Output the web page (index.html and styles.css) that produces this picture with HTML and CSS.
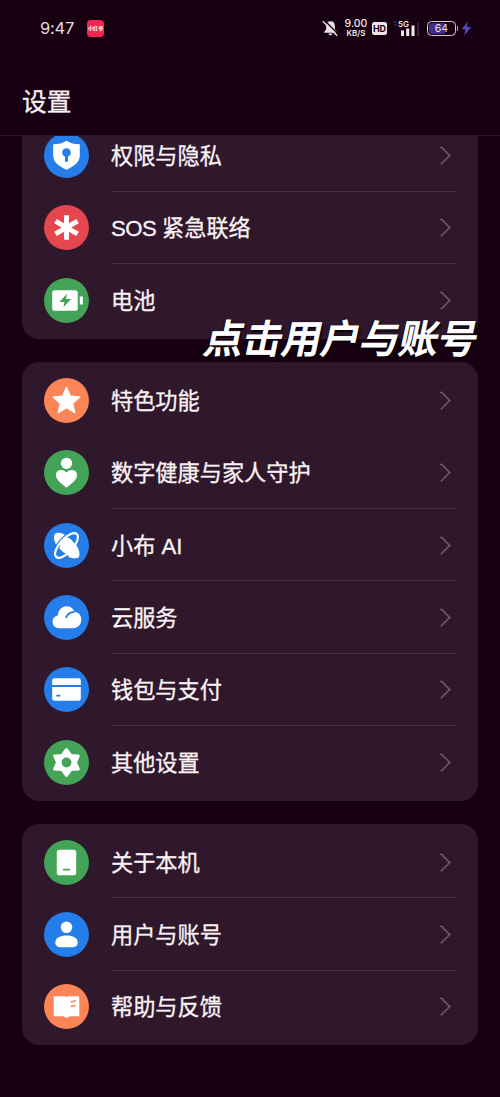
FILE: index.html
```html
<!DOCTYPE html>
<html lang="zh-CN">
<head>
<meta charset="utf-8">
<title>设置</title>
<link rel="stylesheet" href="styles.css">
</head>
<body>
<div class="phone">
  <header class="status">
    <span class="time">9:47</span>
    <span class="app-badge">小红书</span>
    <div class="status-right">
      <svg class="bell" width="17" height="17" viewBox="0 0 17 17"><path d="M8.5 1.2c-3 0-4.4 2-4.4 4.8v3.2L2.2 12v.8h12.6V12l-1.900-2.800V6c0-2.800-1.400-4.800-4.400-4.800zM6.300 13.600a2.300 2.300 0 0 0 4.400 0z" fill="#e8e0e2"/><path d="M2.600 0.600L16.600 14.600" stroke="#170011" stroke-width="1.400"/><path d="M.8 1.200L15.200 15.800" stroke="#e8e0e2" stroke-width="1.400"/></svg>
      <div class="speed"><b>9.00</b><small>KB/S</small></div>
      <span class="hd">HD</span>
      <div class="signal"><span>5G</span><svg width="26" height="15" viewBox="0 0 26 15"><path d="M0 1h4M1 4h3" stroke="#513b49" stroke-width="1"/><path d="M8 9.5h3V15H8zM13.2 7.5h3V15h-3zM18.5 4.5h3V15h-3z" fill="#f0e8ea"/><path d="M24 1.5h2.5V15H24z" fill="#3a2335"/></svg></div>
      <div class="battery"><span>64</span></div>
      <svg class="bolt" width="11" height="15" viewBox="0 0 11 15"><path d="M6.8.5L.7 8.2h3.7L3.2 14.5 10.3 6H6z" fill="#5146c4"/></svg>
    </div>
  </header>
  <h1 class="title">设置</h1>
  <main class="list">
    <section class="card first">
      <div class="row"><svg class="icon blue" viewBox="0 0 44 44"><path d="M22 7.5c3.800 2.500 7.500 3.300 13 3.500V22c0 7-6 10.500-13 14-7-3.500-13-7-13-14V11c5.500-.2 9.200-1 13-3.500z" fill="#fff"/><circle cx="22" cy="19" r="4.200" fill="#247de8"/><path d="M20.500 20h3v8h-3z" fill="#247de8"/></svg><div class="cell"><span>权限与隐私</span><i class="arrow"></i></div></div>
      <div class="row"><svg class="icon red" viewBox="0 0 44 44"><path d="M22 10v24M11.200 15.800l21.600 12.400M32.800 15.800L11.200 28.200" stroke="#fff" stroke-width="4.800"/></svg><div class="cell"><span><span class="latin">SOS </span>紧急联络</span><i class="arrow"></i></div></div>
      <div class="row"><svg class="icon green" viewBox="0 0 44 44"><rect x="8" y="12" width="25" height="20" rx="2.500" fill="#fff"/><path d="M35 18h3v8h-3z" fill="#fff"/><path d="M22.500 15.500L15 23.500h5l-1 5 7.500-8h-5z" fill="#43a457"/></svg><div class="cell"><span>电池</span><i class="arrow"></i></div></div>
    </section>
    <section class="card">
      <div class="row plain"><svg class="icon orange" viewBox="0 0 44 44"><path d="M22 9l3.800 8.700 9.200.900-7 6.300 2.200 9.100-8.200-4.900-8.200 4.900 2.200-9.100-7-6.300 9.200-.900z" fill="#fff" stroke="#fff" stroke-width="1.200" stroke-linejoin="round"/></svg><div class="cell"><span>特色功能</span><i class="arrow"></i></div></div>
      <div class="row"><svg class="icon green" viewBox="0 0 44 44"><circle cx="22" cy="13" r="5.500" fill="#fff"/><path d="M22 37C16 32 11.700 29 11.700 24.500c0-5.500 7-6.500 10.300-2.500 3.300-4 10.300-3 10.300 2.500C32.300 29 28 32 22 37z" fill="#fff"/></svg><div class="cell"><span>数字健康与家人守护</span><i class="arrow"></i></div></div>
      <div class="row"><svg class="icon blue" viewBox="0 0 44 44"><path d="M10.500 11c3-3 9-1 13 3l7 8c3 4 5 9 3 11.500-2 1.500-6 1.500-9 0l-10-9c-4-4-6-10-4-13.500z" fill="#fff"/><ellipse cx="22" cy="22" rx="15" ry="6.500" transform="rotate(-48 22 22)" fill="none" stroke="#247de8" stroke-width="4.600"/><ellipse cx="22" cy="22" rx="15" ry="6.500" transform="rotate(-48 22 22)" fill="none" stroke="#fff" stroke-width="2.200"/><path d="M21 14.500c2-1 4 0 6 2l5 6c2.500 3.500 3.500 8 2 11-2.500 1.500-6.500.500-9-1l-8.500-6.500c-3-3 .5-10 4.500-11.500z" fill="#fff"/></svg><div class="cell"><span>小布 AI</span><i class="arrow"></i></div></div>
      <div class="row"><svg class="icon blue" viewBox="0 0 44 44"><path d="M14.500 32.500a6.300 6.300 0 0 1-1-12.500c.5-5.500 4-9 8.500-9 4 0 6.500 2 8 5.400 4 .6 6.500 3.500 6.500 7.600 0 5-3.500 8.500-8 8.500z" fill="#fff"/><path d="M21.500 22.500c1-3.500 4-5.800 8.500-6" fill="none" stroke="#247de8" stroke-width="1.800"/></svg><div class="cell"><span>云服务</span><i class="arrow"></i></div></div>
      <div class="row"><svg class="icon blue" viewBox="0 0 44 44"><path d="M8 17.500V13a2 2 0 0 1 2-2h24a2 2 0 0 1 2 2v4.500zM8 19.500h28V31a2 2 0 0 1-2 2H10a2 2 0 0 1-2-2z" fill="#fff"/><path d="M12 28h4" stroke="#247de8" stroke-width="1.500"/></svg><div class="cell"><span>钱包与支付</span><i class="arrow"></i></div></div>
      <div class="row"><svg class="icon green" viewBox="0 0 44 44"><path d="M22 9.500l4.200 5.600 7.300.500-2.800 6.400 2.800 6.400-7.300.500L22 34.500l-4.200-5.600-7.300-.500 2.800-6.400-2.800-6.400 7.300-.500z" fill="#fff" stroke="#fff" stroke-width="3" stroke-linejoin="round"/><circle cx="22" cy="22" r="4.800" fill="#43a457"/></svg><div class="cell"><span>其他设置</span><i class="arrow"></i></div></div>
    </section>
    <section class="card">
      <div class="row"><svg class="icon green" viewBox="0 0 44 44"><rect x="12.500" y="9.500" width="19" height="25" rx="2.500" fill="#fff"/><path d="M18.500 29h7" stroke="#43a457" stroke-width="1.700"/></svg><div class="cell"><span>关于本机</span><i class="arrow"></i></div></div>
      <div class="row"><svg class="icon blue" viewBox="0 0 44 44"><circle cx="22" cy="15" r="5.600" fill="#fff"/><path d="M11 30c0-4.500 5-7 11-7s11 2.500 11 7c0 3-3 4.500-5.500 4.500h-11C14 34.500 11 33 11 30z" fill="#fff"/></svg><div class="cell"><span>用户与账号</span><i class="arrow"></i></div></div>
      <div class="row"><svg class="icon orange" viewBox="0 0 44 44"><path d="M10.500 12H19c1.500 0 2.500.4 3 1 .5-.6 1.500-1 3-1h8.500a1 1 0 0 1 1 1v17.500a1 1 0 0 1-1 1H26c-2 0-2.500 1.500-4 1.500s-2-1.500-4-1.500h-7.500a1 1 0 0 1-1-1V13a1 1 0 0 1 1-1z" fill="#fff"/><path d="M26 17.500l5-1M26 22l5-1" stroke="#fb8556" stroke-width="1.500"/></svg><div class="cell"><span>帮助与反馈</span><i class="arrow"></i></div></div>
    </section>
  </main>
  <div class="caption">点击用户与账号</div>
</div>
</body>
</html>
```
FILE: styles.css
```css
* { box-sizing: border-box; }
body { margin: 0; background: #170011; font-family: "Liberation Sans", "Noto Sans CJK SC", sans-serif; color: #faf3f5; }
.phone { position: relative; width: 500px; height: 1097px; overflow: hidden; display: flex; flex-direction: column; }
.status { height: 56px; flex: none; display: flex; align-items: center; padding: 0 28px 0 40px; font-family: Inter, "Noto Sans CJK SC", sans-serif; }
.time { font-size: 16.500px; line-height: 20px; width: 47px; color: #e6dce0; letter-spacing: -.2px; }
.app-badge { width: 17px; height: 17px; border-radius: 4px; background: #ed2855; font-size: 5px; font-weight: 700; line-height: 17px; text-align: center; white-space: nowrap; color: #fff; }
.status-right { margin-left: auto; display: flex; align-items: center; color: #eee5e8; }
.bell { margin-right: 5px; }
.speed { width: 24px; margin-right: 4px; display: flex; flex-direction: column; align-items: center; }
.speed b { font-size: 10.5px; line-height: 10px; font-weight: 500; }
.speed small { font-size: 8px; line-height: 8px; font-weight: 600; }
.hd { width: 15px; height: 13px; border-radius: 2.500px; background: #eee5e8; color: #170011; font-size: 9px; font-weight: 700; line-height: 13px; text-align: center; margin-right: 6px; }
.signal { position: relative; width: 26px; height: 15px; margin-right: 8px; }
.signal svg { display: block; }
.signal span { position: absolute; left: 5px; top: -1px; font-size: 8px; line-height: 8px; font-weight: 600; }
.battery { position: relative; width: 29px; height: 15px; margin-right: 5px; border: 1px solid #d8ccd8; border-radius: 4.500px; padding: 1px; }
.battery span { display: block; height: 11px; border-radius: 3px; background: linear-gradient(90deg, #3b2f86 64%, transparent 64%); font-size: 10.5px; line-height: 11px; text-align: center; }
.battery::after { content: ""; position: absolute; right: -3px; top: 4px; width: 1.500px; height: 5px; background: #a99daa; }
.title { margin: 0; flex: none; height: 79px; padding: 30px 22px 0; font-size: 24.700px; line-height: 34px; font-weight: 400; -webkit-text-stroke: .3px currentColor; }
.list { flex: 1; overflow: hidden; padding: 0 22px; border-top: 1px solid #2b1527; }
.card { background: #2f182b; border-radius: 17px; padding: 2.300px 0 2.300px 22px; margin-bottom: 23px; }
.card.first { margin-top: -19px; }
.row { height: 72.400px; display: flex; align-items: center; }
.icon { width: 45px; height: 45px; flex: none; margin-right: 22px; border-radius: 50%; }
.blue { background: #247de8; }
.red { background: #e6464d; }
.green { background: #43a457; }
.orange { background: #fb8556; }
.cell { flex: 1; height: 100%; margin-right: 22px; border-bottom: 1px solid #462f42; display: flex; align-items: center; justify-content: space-between; font-size: 22.200px; line-height: 32px; padding-top: 4px; -webkit-text-stroke: .3px currentColor; }
.latin { letter-spacing: -.5px; }
.row:last-child .cell, .plain .cell { border-bottom-color: transparent; }
.arrow { width: 13px; height: 13px; margin: 0 8px 3px 0; border: solid #7d6779; border-width: 1.500px 1.500px 0 0; box-shadow: inset -.5px .5px 0 #7d6779; transform: rotate(45deg); }
.caption { position: absolute; left: 205px; top: 315px; font-size: 39px; line-height: 50px; font-weight: 500; color: #fff; transform: skewX(-12deg); white-space: nowrap; -webkit-text-stroke: 1px #fff; text-shadow: 1px 1px 2px #08000a, 2px 2px 3px #08000a, -1px 0 2px #170011; }
```
